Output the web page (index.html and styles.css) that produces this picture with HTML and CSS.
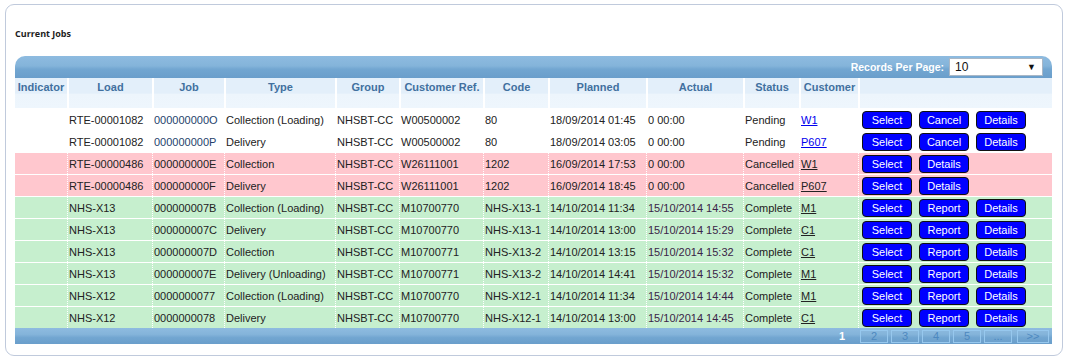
FILE: index.html
```html
<!DOCTYPE html>
<html>
<head>
<meta charset="utf-8">
<link rel="stylesheet" href="styles.css">
</head>
<body>
<div class="panel">
  <div class="title">Current Jobs</div>
  <div class="grid">
    <div class="topbar">
      <span class="rpp-label">Records Per Page:</span>
      <div class="rpp-select"><span>10</span><span class="arrow">▼</span></div>
    </div>
    <table class="jobs">
      <colgroup>
        <col style="width:52px"><col style="width:85px"><col style="width:72px"><col style="width:111px">
        <col style="width:64px"><col style="width:84px"><col style="width:65px"><col style="width:98px">
        <col style="width:97px"><col style="width:56px"><col style="width:59px"><col style="width:194px">
      </colgroup>
      <thead>
        <tr>
          <th>Indicator</th><th>Load</th><th>Job</th><th>Type</th><th>Group</th><th>Customer Ref.</th>
          <th>Code</th><th>Planned</th><th>Actual</th><th>Status</th><th>Customer</th><th></th>
        </tr>
      </thead>
      <tbody>
        <tr class="pending">
          <td></td><td>RTE-00001082</td><td class="job">000000000O</td><td>Collection (Loading)</td><td>NHSBT-CC</td><td>W00500002</td>
          <td>80</td><td>18/09/2014 01:45</td><td>0 00:00</td><td>Pending</td><td><a class="link">W1</a></td>
          <td class="acts"><span class="btn">Select</span><span class="btn">Cancel</span><span class="btn">Details</span></td>
        </tr>
        <tr class="pending">
          <td></td><td>RTE-00001082</td><td class="job">000000000P</td><td>Delivery</td><td>NHSBT-CC</td><td>W00500002</td>
          <td>80</td><td>18/09/2014 03:05</td><td>0 00:00</td><td>Pending</td><td><a class="link">P607</a></td>
          <td class="acts"><span class="btn">Select</span><span class="btn">Cancel</span><span class="btn">Details</span></td>
        </tr>
        <tr class="cancelled">
          <td></td><td>RTE-00000486</td><td class="job">000000000E</td><td>Collection</td><td>NHSBT-CC</td><td>W26111001</td>
          <td>1202</td><td>16/09/2014 17:53</td><td>0 00:00</td><td>Cancelled</td><td><a class="link">W1</a></td>
          <td class="acts"><span class="btn">Select</span><span class="btn">Details</span></td>
        </tr>
        <tr class="cancelled">
          <td></td><td>RTE-00000486</td><td class="job">000000000F</td><td>Delivery</td><td>NHSBT-CC</td><td>W26111001</td>
          <td>1202</td><td>16/09/2014 18:45</td><td>0 00:00</td><td>Cancelled</td><td><a class="link">P607</a></td>
          <td class="acts"><span class="btn">Select</span><span class="btn">Details</span></td>
        </tr>
        <tr class="complete">
          <td></td><td>NHS-X13</td><td class="job">000000007B</td><td>Collection (Loading)</td><td>NHSBT-CC</td><td>M10700770</td>
          <td>NHS-X13-1</td><td>14/10/2014 11:34</td><td class="act">15/10/2014 14:55</td><td>Complete</td><td><a class="link">M1</a></td>
          <td class="acts"><span class="btn">Select</span><span class="btn">Report</span><span class="btn">Details</span></td>
        </tr>
        <tr class="complete">
          <td></td><td>NHS-X13</td><td class="job">000000007C</td><td>Delivery</td><td>NHSBT-CC</td><td>M10700770</td>
          <td>NHS-X13-1</td><td>14/10/2014 13:00</td><td class="act">15/10/2014 15:29</td><td>Complete</td><td><a class="link">C1</a></td>
          <td class="acts"><span class="btn">Select</span><span class="btn">Report</span><span class="btn">Details</span></td>
        </tr>
        <tr class="complete">
          <td></td><td>NHS-X13</td><td class="job">000000007D</td><td>Collection</td><td>NHSBT-CC</td><td>M10700771</td>
          <td>NHS-X13-2</td><td>14/10/2014 13:15</td><td class="act">15/10/2014 15:32</td><td>Complete</td><td><a class="link">C1</a></td>
          <td class="acts"><span class="btn">Select</span><span class="btn">Report</span><span class="btn">Details</span></td>
        </tr>
        <tr class="complete">
          <td></td><td>NHS-X13</td><td class="job">000000007E</td><td>Delivery (Unloading)</td><td>NHSBT-CC</td><td>M10700771</td>
          <td>NHS-X13-2</td><td>14/10/2014 14:41</td><td class="act">15/10/2014 15:32</td><td>Complete</td><td><a class="link">M1</a></td>
          <td class="acts"><span class="btn">Select</span><span class="btn">Report</span><span class="btn">Details</span></td>
        </tr>
        <tr class="complete">
          <td></td><td>NHS-X12</td><td class="job">0000000077</td><td>Collection (Loading)</td><td>NHSBT-CC</td><td>M10700770</td>
          <td>NHS-X12-1</td><td>14/10/2014 11:34</td><td class="act">15/10/2014 14:44</td><td>Complete</td><td><a class="link">M1</a></td>
          <td class="acts"><span class="btn">Select</span><span class="btn">Report</span><span class="btn">Details</span></td>
        </tr>
        <tr class="complete">
          <td></td><td>NHS-X12</td><td class="job">0000000078</td><td>Delivery</td><td>NHSBT-CC</td><td>M10700770</td>
          <td>NHS-X12-1</td><td>14/10/2014 13:00</td><td class="act">15/10/2014 14:45</td><td>Complete</td><td><a class="link">C1</a></td>
          <td class="acts"><span class="btn">Select</span><span class="btn">Report</span><span class="btn">Details</span></td>
        </tr>
      </tbody>
    </table>
    <div class="footbar">
      <span class="cur">1</span>
      <span class="pg">2</span>
      <span class="pg">3</span>
      <span class="pg">4</span>
      <span class="pg">5</span>
      <span class="pg">...</span>
      <span class="pg wide">&gt;&gt;</span>
    </div>
  </div>
</div>
</body>
</html>
```

FILE: styles.css
```css
html, body {
  margin: 0;
  padding: 0;
  background: #fff;
}
body {
  font-family: "Liberation Sans", Arial, sans-serif;
  font-size: 11px;
  color: #222;
}
.panel {
  margin: 4px 4px 0 5px;
  height: 350px;
  border: 1px solid #c0cadc;
  border-radius: 9px;
  padding: 0 10px 0 9px;
}
.title {
  margin-top: 23px;
  height: 12px;
  line-height: 12px;
  font-family: "Open Sans", sans-serif;
  font-weight: bold;
  font-size: 9px;
  color: #1d1d1d;
}
.grid {
  margin-top: 16px;
  width: 1037px;
}
.topbar {
  height: 22px;
  border-radius: 10px 10px 0 0;
  background: linear-gradient(180deg, #8ebbe0 0%, #84b4da 45%, #72a6d1 60%, #6a9ecb 100%);
  display: flex;
  align-items: center;
  justify-content: flex-end;
  padding-right: 9px;
  box-sizing: border-box;
}
.rpp-label {
  color: #fff;
  font-weight: bold;
  font-size: 10.5px;
  margin-right: 5px;
}
.rpp-select {
  width: 94px;
  height: 18px;
  box-sizing: border-box;
  background: #fff;
  border: 1px solid #a9b7c6;
  display: flex;
  align-items: center;
  justify-content: space-between;
  padding: 0 6px 0 5px;
  font-size: 12px;
  color: #111;
}
.rpp-select .arrow {
  font-size: 9px;
}
.jobs {
  width: 1037px;
  table-layout: fixed;
  border-collapse: separate;
  border-spacing: 0;
}
.jobs th {
  height: 30px;
  box-sizing: border-box;
  padding: 3px 0 0;
  vertical-align: top;
  text-align: center;
  font-weight: bold;
  font-size: 11px;
  color: #41709f;
  background: linear-gradient(180deg, #e3effa 0%, #e3effa 50%, #edf5fc 55%, #eef6fd 100%);
  border-left: 2px solid #fff;
  white-space: nowrap;
}
.jobs th:first-child {
  border-left: 0;
}
.jobs td {
  height: 22px;
  box-sizing: border-box;
  padding: 0 0 0 1px;
  white-space: nowrap;
  overflow: hidden;
  border-top: 1px solid #fff;
  border-left: 1px dotted #fff;
  color: #222;
}
.jobs td:first-child {
  border-left: 0;
}
.pending td {
  background: #fff;
}
.pending td.job {
  color: #253f6c;
}
.cancelled td {
  background: #ffc7ce;
}
.complete td {
  background: #c6efce;
}
.complete td.act {
  color: #3a2448;
}
.link {
  text-decoration: underline;
  color: #222;
}
.pending .link {
  color: #0000ee;
}
.jobs td.acts {
  padding-left: 3px;
}
.btn {
  display: inline-block;
  width: 50px;
  height: 18px;
  box-sizing: border-box;
  margin-right: 7px;
  background: #0000ff;
  border: 1px solid #111;
  border-radius: 4px;
  color: #fff;
  text-align: center;
  line-height: 16px;
  font-size: 11px;
  vertical-align: middle;
}
.footbar {
  height: 16px;
  background: linear-gradient(180deg, #8ebbe0 0%, #84b4da 40%, #72a6d1 60%, #6a9ecb 100%);
  display: flex;
  align-items: center;
  justify-content: flex-end;
  gap: 3px;
  padding-right: 3px;
}
.cur {
  color: #fff;
  font-weight: bold;
  font-size: 11px;
  margin-right: 12px;
}
.pg {
  width: 28px;
  height: 13px;
  box-sizing: border-box;
  border: 1px solid #97c8ee;
  color: #4d88bf;
  font-size: 11px;
  line-height: 11px;
  text-align: center;
}
.pg.wide {
  width: 32px;
  margin-left: 2px;
}
```
